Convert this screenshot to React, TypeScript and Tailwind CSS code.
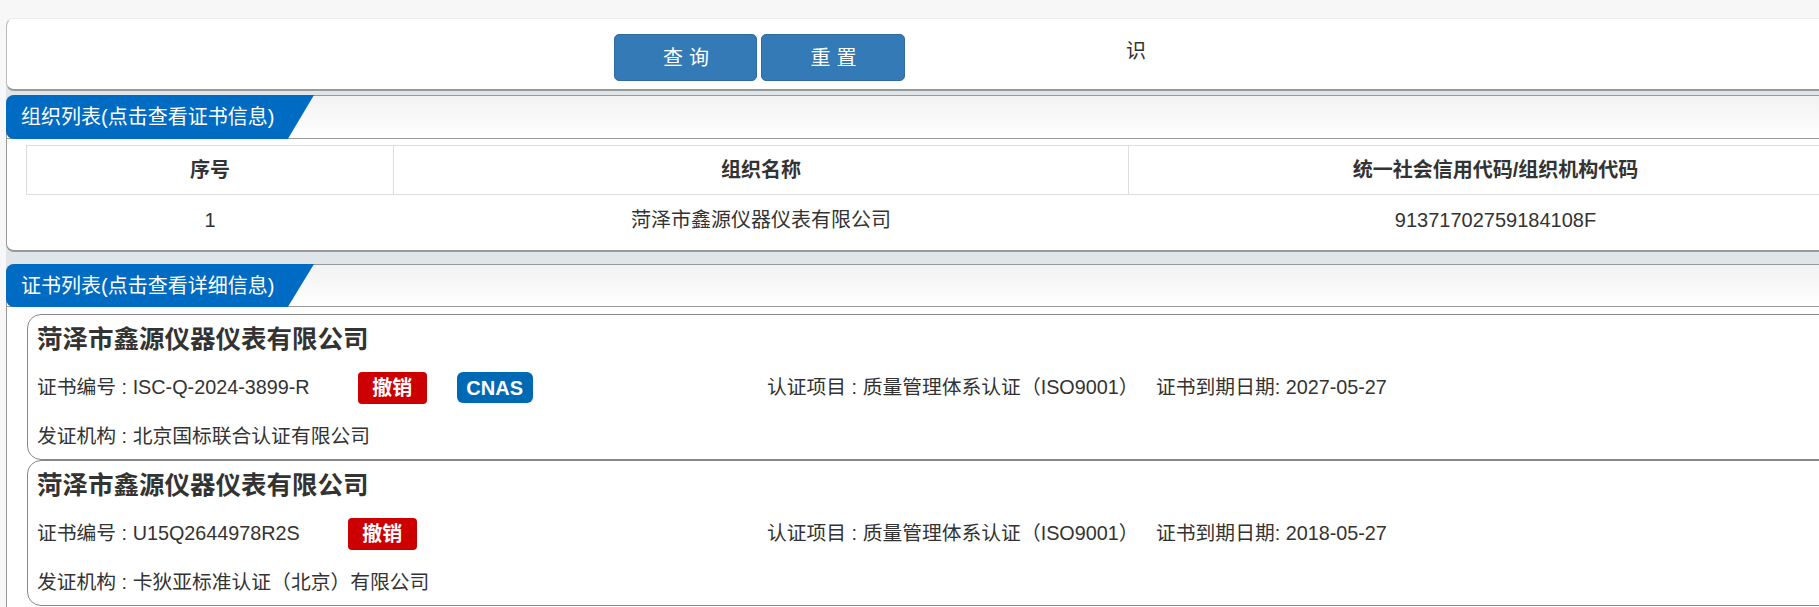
const font = "font-['Liberation_Sans','Noto_Sans_CJK_SC',sans-serif]";

function SectionHead({ title, height }: { title: string; height: string }) {
  return (
    <div className={`relative ${height} rounded-tl-[8px] border-y border-[#999] bg-gradient-to-b from-[#f2f2f2] to-white`}>
      <div className="absolute -top-px -bottom-px -left-px flex w-[308px] items-center rounded-l-[8px] bg-[#006bc2] pl-[15px] text-[20px] text-white [clip-path:polygon(0_0,100%_0,91.5%_100%,0_100%)]">
        {title}
      </div>
    </div>
  );
}

function CertCard({
  no,
  cnas,
  project,
  expires,
  issuer,
}: {
  no: string;
  cnas?: boolean;
  project: string;
  expires: string;
  issuer: string;
}) {
  return (
    <div className="h-[146px] rounded-[14px] border border-[#888] pl-[9px] text-[19.8px] text-[#333]">
      <div className="pt-[6px] text-[25.5px] leading-[36px] font-bold">菏泽市鑫源仪器仪表有限公司</div>
      <div className="mt-[14px] flex h-[33px] items-center">
        <div className="flex w-[730px] items-center">
          <span>证书编号 : {no}</span>
          <span className="ml-[48px] flex h-[32px] w-[69px] items-center justify-center rounded-[4px] bg-[#cc0000] text-[20px] font-bold text-white">
            撤销
          </span>
          {cnas && (
            <span className="ml-[30px] flex h-[31px] w-[76px] items-center justify-center rounded-[6px] bg-[#0069b4] text-[20px] font-bold text-white">
              CNAS
            </span>
          )}
        </div>
        <span className="w-[389px]">认证项目 : {project}</span>
        <span>证书到期日期: {expires}</span>
      </div>
      <div className="mt-[16px] leading-[33px]">发证机构 : {issuer}</div>
    </div>
  );
}

export default function App() {
  return (
    <div className={`${font} h-[607px] w-[1819px] overflow-hidden bg-[#f7f7f7] text-[#333]`}>
      <div className="w-[1900px] pt-[18px] pl-[6px]">
        <div className="rounded-t-[8px] bg-[#e0e5e9]">
          <div className="flex h-[73px] rounded-[8px] border border-b-2 border-[#eee] border-b-[#999] border-l-[#bbb] bg-white pt-[15px] pl-[607px]">
            <button className="h-[47px] w-[143px] rounded-[5px] border border-[#2e6da4] bg-[#337ab7] pl-[7px] text-[20px] tracking-[6px] text-white">查询</button>
            <button className="ml-[4px] h-[47px] w-[144px] rounded-[5px] border border-[#2e6da4] bg-[#337ab7] pl-[7px] text-[20px] tracking-[6px] text-white">重置</button>
            <span className="mt-[5px] ml-[221px] text-[20px] leading-[24px]">识</span>
          </div>

          <div className="pt-[4px] pb-[12px]">
            <div className="h-[157px] rounded-[8px] border-b-2 border-l border-[#999] bg-white">
              <SectionHead title="组织列表(点击查看证书信息)" height="h-[44px]" />
              <div className="pt-[6px] pl-[19px]">
                <table className="w-[1837px] table-fixed border-collapse text-center text-[20px] text-[#333]">
                  <thead>
                    <tr className="h-[49px] border border-[#ddd] font-bold">
                      <th className="w-[367px] border border-[#ddd]">序号</th>
                      <th className="w-[735px] border border-[#ddd]">组织名称</th>
                      <th className="border border-[#ddd]">统一社会信用代码/组织机构代码</th>
                    </tr>
                  </thead>
                  <tbody>
                    <tr className="h-[50px]">
                      <td>1</td>
                      <td>菏泽市鑫源仪器仪表有限公司</td>
                      <td>91371702759184108F</td>
                    </tr>
                  </tbody>
                </table>
              </div>
            </div>
          </div>

          <div className="h-[343px] rounded-tl-[8px] border-l border-[#999] bg-white">
            <SectionHead title="证书列表(点击查看详细信息)" height="h-[43px]" />
            <div className="pt-[7px] pl-[20px]">
              <CertCard
                no="ISC-Q-2024-3899-R"
                cnas
                project="质量管理体系认证（ISO9001）"
                expires="2027-05-27"
                issuer="北京国标联合认证有限公司"
              />
              <CertCard
                no="U15Q2644978R2S"
                project="质量管理体系认证（ISO9001）"
                expires="2018-05-27"
                issuer="卡狄亚标准认证（北京）有限公司"
              />
            </div>
          </div>
        </div>
      </div>
    </div>
  );
}
